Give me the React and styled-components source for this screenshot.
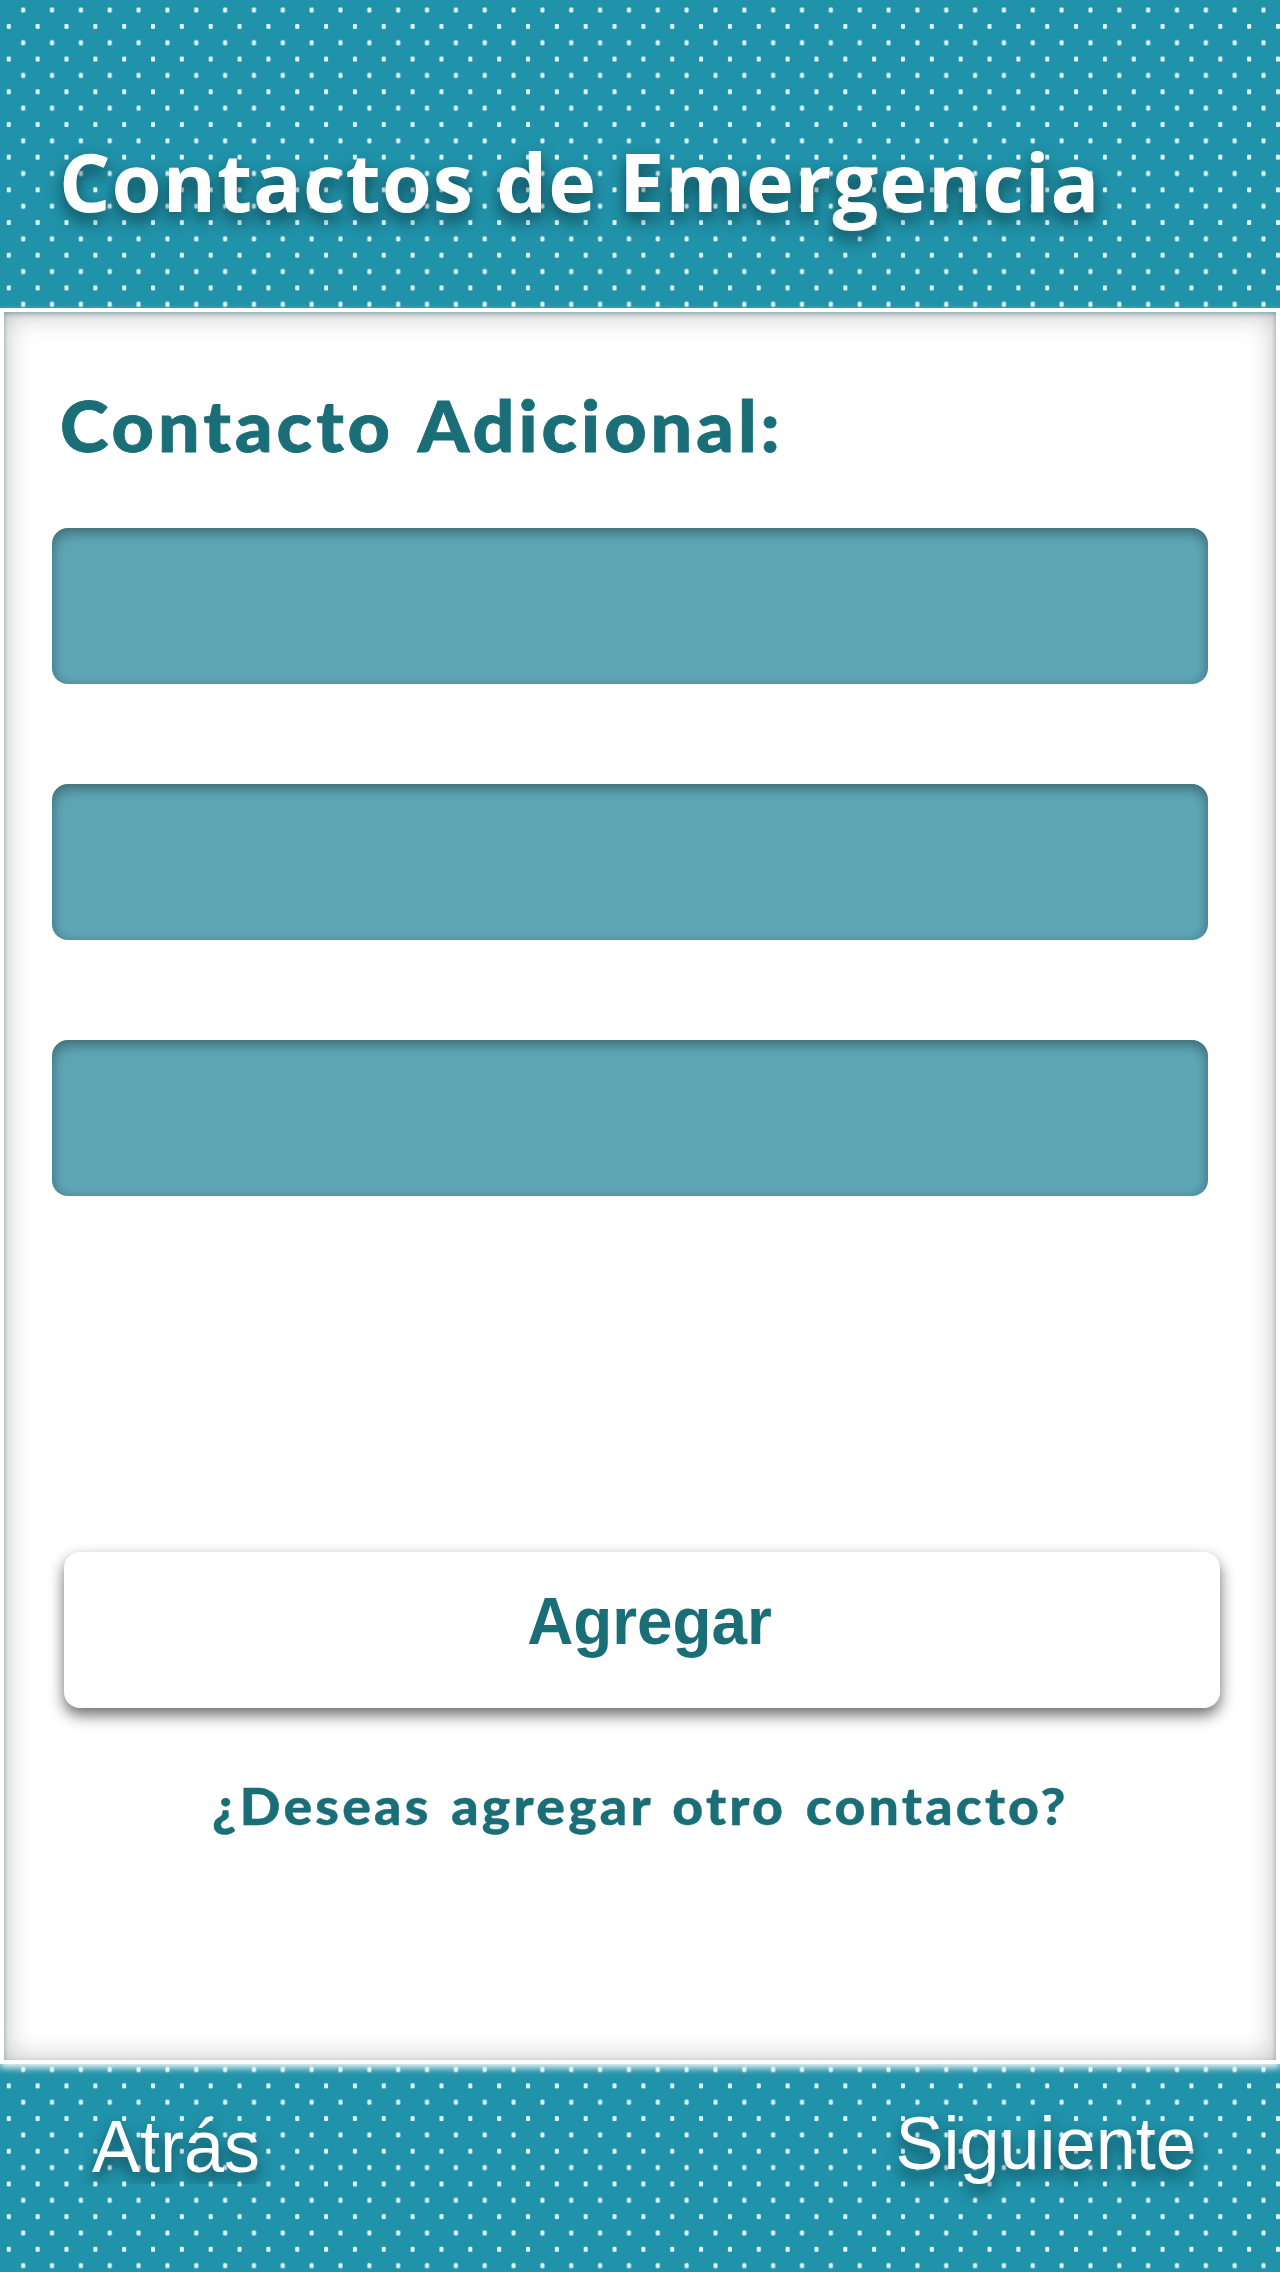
import React from "react";
import styled, { createGlobalStyle } from "styled-components";

const GlobalStyle = createGlobalStyle`
  * { box-sizing: border-box; }
  body { margin: 0; background: #2092a9; }
`;

const Screen = styled.div`
  position: relative;
  isolation: isolate;
  display: flex;
  flex-direction: column;
  width: 1280px;
  height: 2272px;
  overflow: hidden;
  background: #2092a9;
`;

const Texture = styled.svg`
  position: absolute;
  inset: 0;
  z-index: -1;
  width: 100%;
  height: 100%;
`;

const Header = styled.header`
  height: 308px;
  padding: 125px 0 0 59px;
`;

const Title = styled.h1`
  margin: 0;
  font: 700 81px/112px "Open Sans", sans-serif;
  letter-spacing: 0.97px;
  white-space: nowrap;
  color: #fff;
  text-shadow: 0 8px 16px rgba(0, 0, 0, 0.5);
`;

const Panel = styled.main`
  display: flex;
  flex-direction: column;
  height: 1756px;
  padding: 63px 0 0 48px;
  border: 4px solid #fff;
  background: #fff;
  box-shadow:
    0 4px 7px rgba(255, 255, 255, 0.9),
    inset 0 2px 5px rgba(20, 100, 110, 0.42),
    inset 0 1px 28px rgba(30, 20, 25, 0.28);
`;

const Subtitle = styled.h2`
  align-self: flex-start;
  margin: 0 0 53px 8px;
  font: 900 70px/100px Lato, sans-serif;
  letter-spacing: 3.8px;
  word-spacing: 4.5px;
  color: #1a6e77;
  white-space: nowrap;
  -webkit-text-stroke: 0.8px #1a6e77;
  transform: scaleX(1.05);
  transform-origin: left;
`;

const Fields = styled.div`
  display: flex;
  flex-direction: column;
  gap: 100px;
`;

const Field = styled.input`
  width: 1156px;
  height: 156px;
  padding: 0 32px;
  border: 0;
  border-radius: 16px;
  outline: 0;
  background: #5ea6b6;
  color: #fff;
  font: 56px "Liberation Sans", Arial, sans-serif;
  box-shadow: inset 0 4px 13px rgba(30, 50, 58, 0.55);
`;

const AddButton = styled.button`
  width: 1156px;
  height: 156px;
  margin: 356px 0 0 12px;
  padding: 0 0 18px 16px;
  border: 0;
  border-radius: 16px;
  background: #fff;
  color: #1a6e77;
  font: 700 66px/80px "Liberation Sans", Arial, sans-serif;
  box-shadow: 0 7px 15px rgba(0, 0, 0, 0.58);
`;

const ButtonLabel = styled.span`
  display: inline-block;
  transform: scaleX(0.967);
`;

const Question = styled.p`
  align-self: flex-start;
  margin: 58px 0 0 160px;
  font: 900 51px/80px Lato, sans-serif;
  letter-spacing: 3.05px;
  word-spacing: 3.5px;
  color: #1a6e77;
  white-space: nowrap;
  -webkit-text-stroke: 0.4px #1a6e77;
  transform: scaleX(1.05);
  transform-origin: left;
`;

const Footer = styled.footer`
  display: flex;
  justify-content: space-between;
  align-items: flex-start;
  height: 208px;
  padding: 33px 84px 0 92px;
`;

const NavLink = styled.a`
  margin-top: ${(p) => p.$drop || 0}px;
  font: 400 75px/90px "Liberation Sans", Arial, sans-serif;
  color: #fff;
  text-shadow: 0 8px 14px rgba(0, 0, 0, 0.5);
  transform: scaleX(0.96);
  transform-origin: ${(p) => p.$side};
`;

const BackLink = styled(NavLink)`
  clip-path: inset(-20px -24px 7px);
`;

const fields = ["Nombre", "Teléfono", "Correo"];

export default function App() {
  return (
    <Screen>
      <GlobalStyle />
      <Texture aria-hidden="true">
        <defs>
          <pattern
            id="dots"
            x="3.8"
            y="5.1"
            width="28.845"
            height="32.69"
            patternUnits="userSpaceOnUse"
          >
            <rect x="3" y="18.8" width="4" height="5" rx="1.1" fill="#e4fcff" />
            <rect x="17.4" y="2.5" width="4" height="5" rx="1.1" fill="#e4fcff" />
          </pattern>
        </defs>
        <rect width="1280" height="2272" fill="url(#dots)" />
      </Texture>
      <Header>
        <Title>Contactos de Emergencia</Title>
      </Header>
      <Panel>
        <Subtitle>Contacto Adicional:</Subtitle>
        <Fields>
          {fields.map((name) => (
            <Field key={name} aria-label={name} />
          ))}
        </Fields>
        <AddButton type="button">
          <ButtonLabel>Agregar</ButtonLabel>
        </AddButton>
        <Question>¿Deseas agregar otro contacto?</Question>
      </Panel>
      <Footer>
        <BackLink $drop={4} $side="left">Atrás</BackLink>
        <NavLink $drop={1} $side="right">Siguiente</NavLink>
      </Footer>
    </Screen>
  );
}
